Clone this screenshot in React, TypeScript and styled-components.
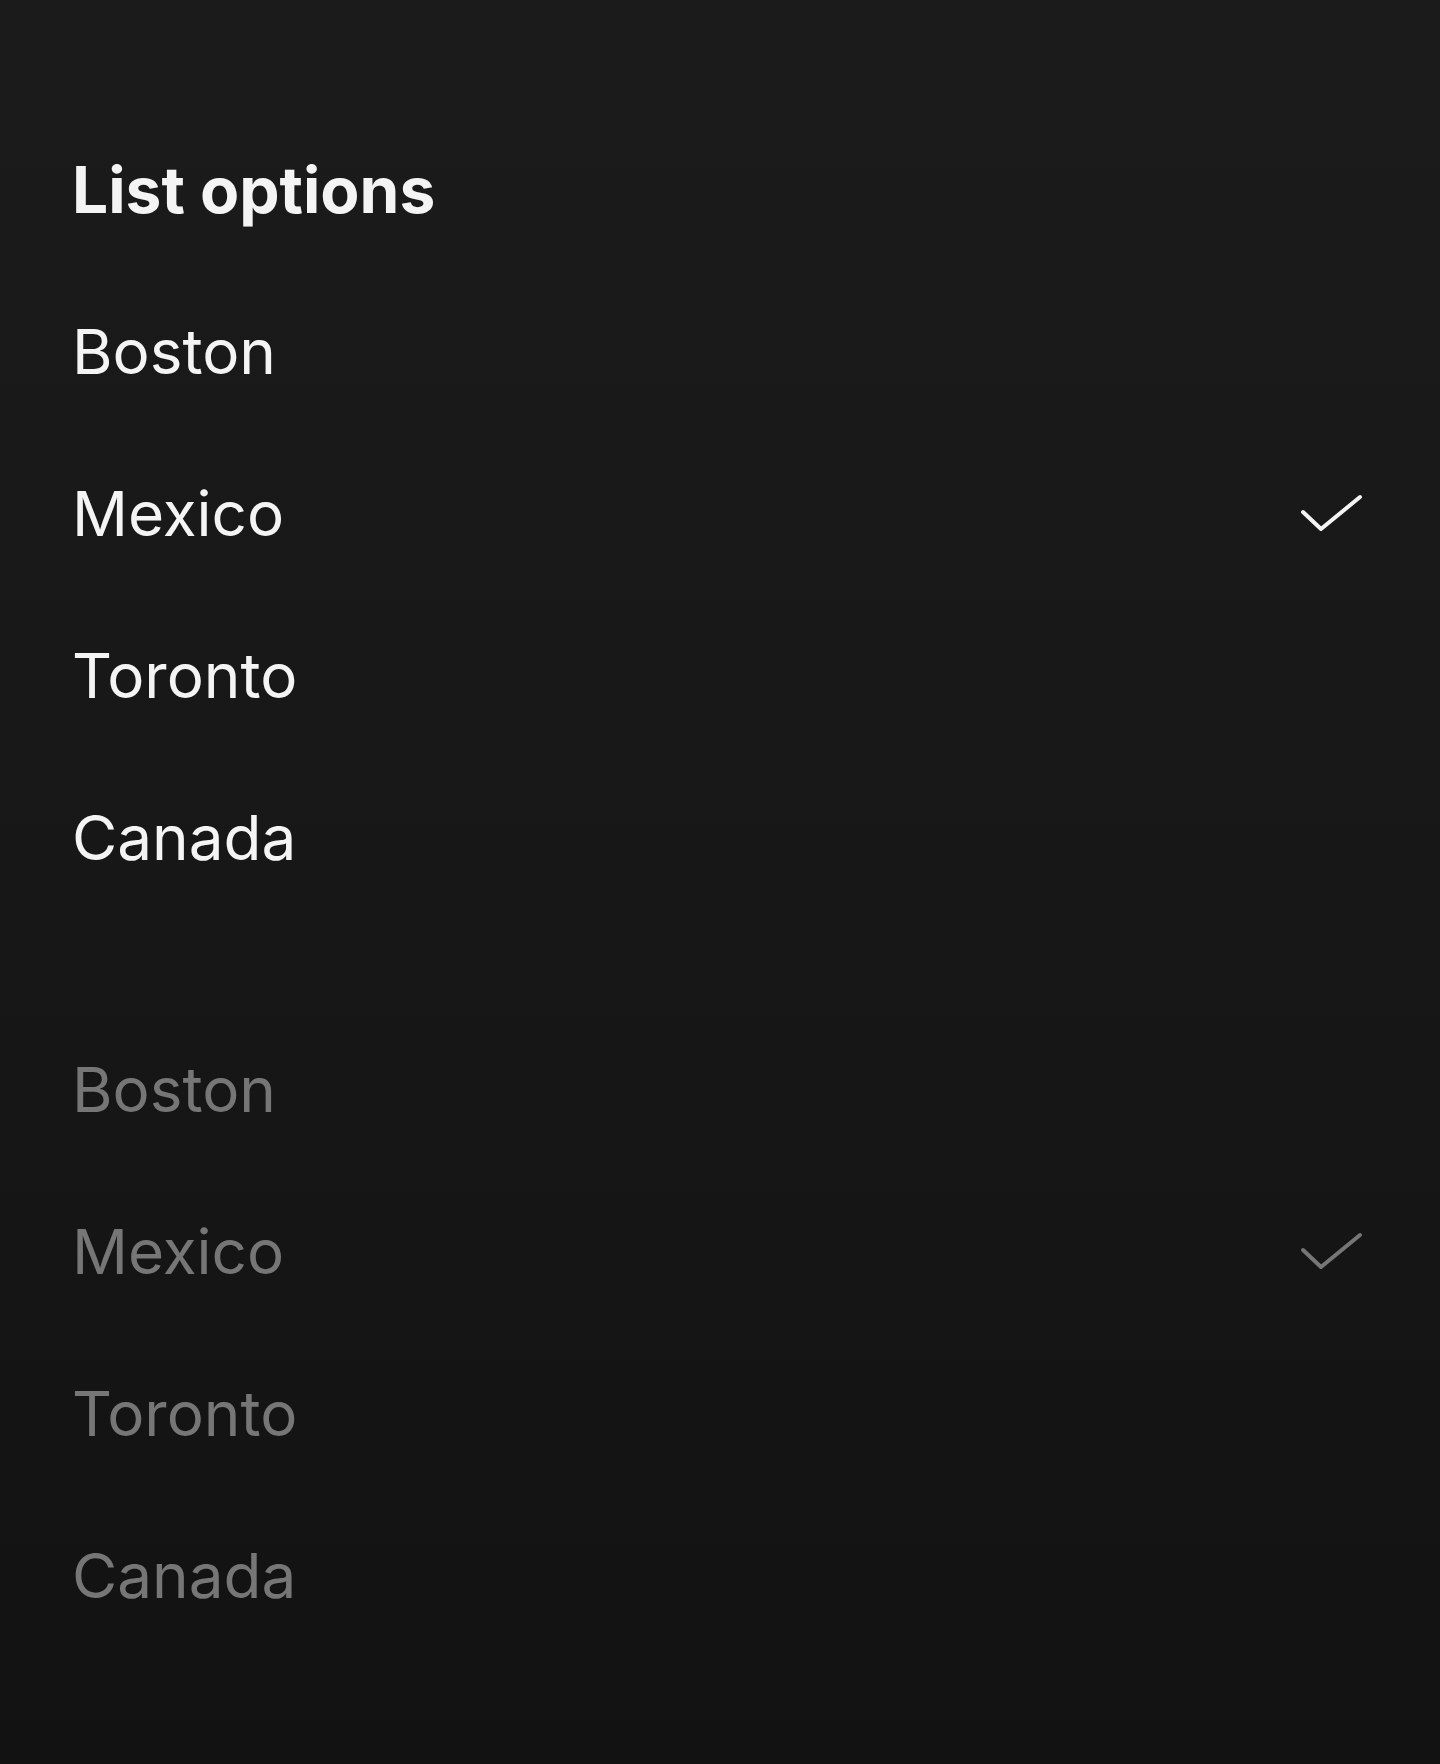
import React from 'react';
import styled, {createGlobalStyle} from 'styled-components';

const GlobalStyle = createGlobalStyle`
  html, body {
    margin: 0;
    padding: 0;
  }
  body {
    background: #131313;
    font-family: Inter, 'Noto Sans', sans-serif;
  }
`;

type City = {name: string; selected?: boolean};

const cities: City[] = [
  {name: 'Boston'},
  {name: 'Mexico', selected: true},
  {name: 'Toronto'},
  {name: 'Canada'},
];

const CheckIcon = () => (
  <svg width="64" height="42" viewBox="0 0 64 42" fill="none">
    <path
      d="M3 20 L21 37 L60 5"
      stroke="currentColor"
      strokeWidth="4"
      strokeLinecap="round"
      strokeLinejoin="round"
    />
  </svg>
);

const OptionList = ({disabled}: {disabled?: boolean}) => (
  <List>
    {cities.map((city) => (
      <Row key={city.name} $disabled={disabled}>
        <Label>{city.name}</Label>
        {city.selected && <CheckIcon />}
      </Row>
    ))}
  </List>
);

export default function App() {
  return (
    <>
      <GlobalStyle />
      <Page>
        <Title>List options</Title>
        <Groups>
          <OptionList />
          <OptionList disabled />
        </Groups>
      </Page>
    </>
  );
}

const Page = styled.main`
  min-height: 100vh;
  box-sizing: border-box;
  padding: 150px 0 0;
  background: linear-gradient(180deg, #1b1b1b 0%, #171717 50%, #121212 100%);
`;

const Title = styled.h1`
  margin: 0;
  padding: 0 72px;
  height: 80px;
  line-height: 80px;
  font-size: 64px;
  font-weight: 700;
  color: #f4f4f4;
`;

const Groups = styled.div`
  display: flex;
  flex-direction: column;
  gap: 90px;
  padding-top: 40px;
`;

const List = styled.ul`
  list-style: none;
  margin: 0;
  padding: 0;
`;

const Row = styled.li<{$disabled?: boolean}>`
  display: flex;
  align-items: center;
  justify-content: space-between;
  height: 162px;
  padding: 0 76px 0 72px;
  color: ${(p) => (p.$disabled ? '#767676' : '#f4f4f4')};
`;

const Label = styled.span`
  font-size: 62px;
  font-weight: 400;
`;
